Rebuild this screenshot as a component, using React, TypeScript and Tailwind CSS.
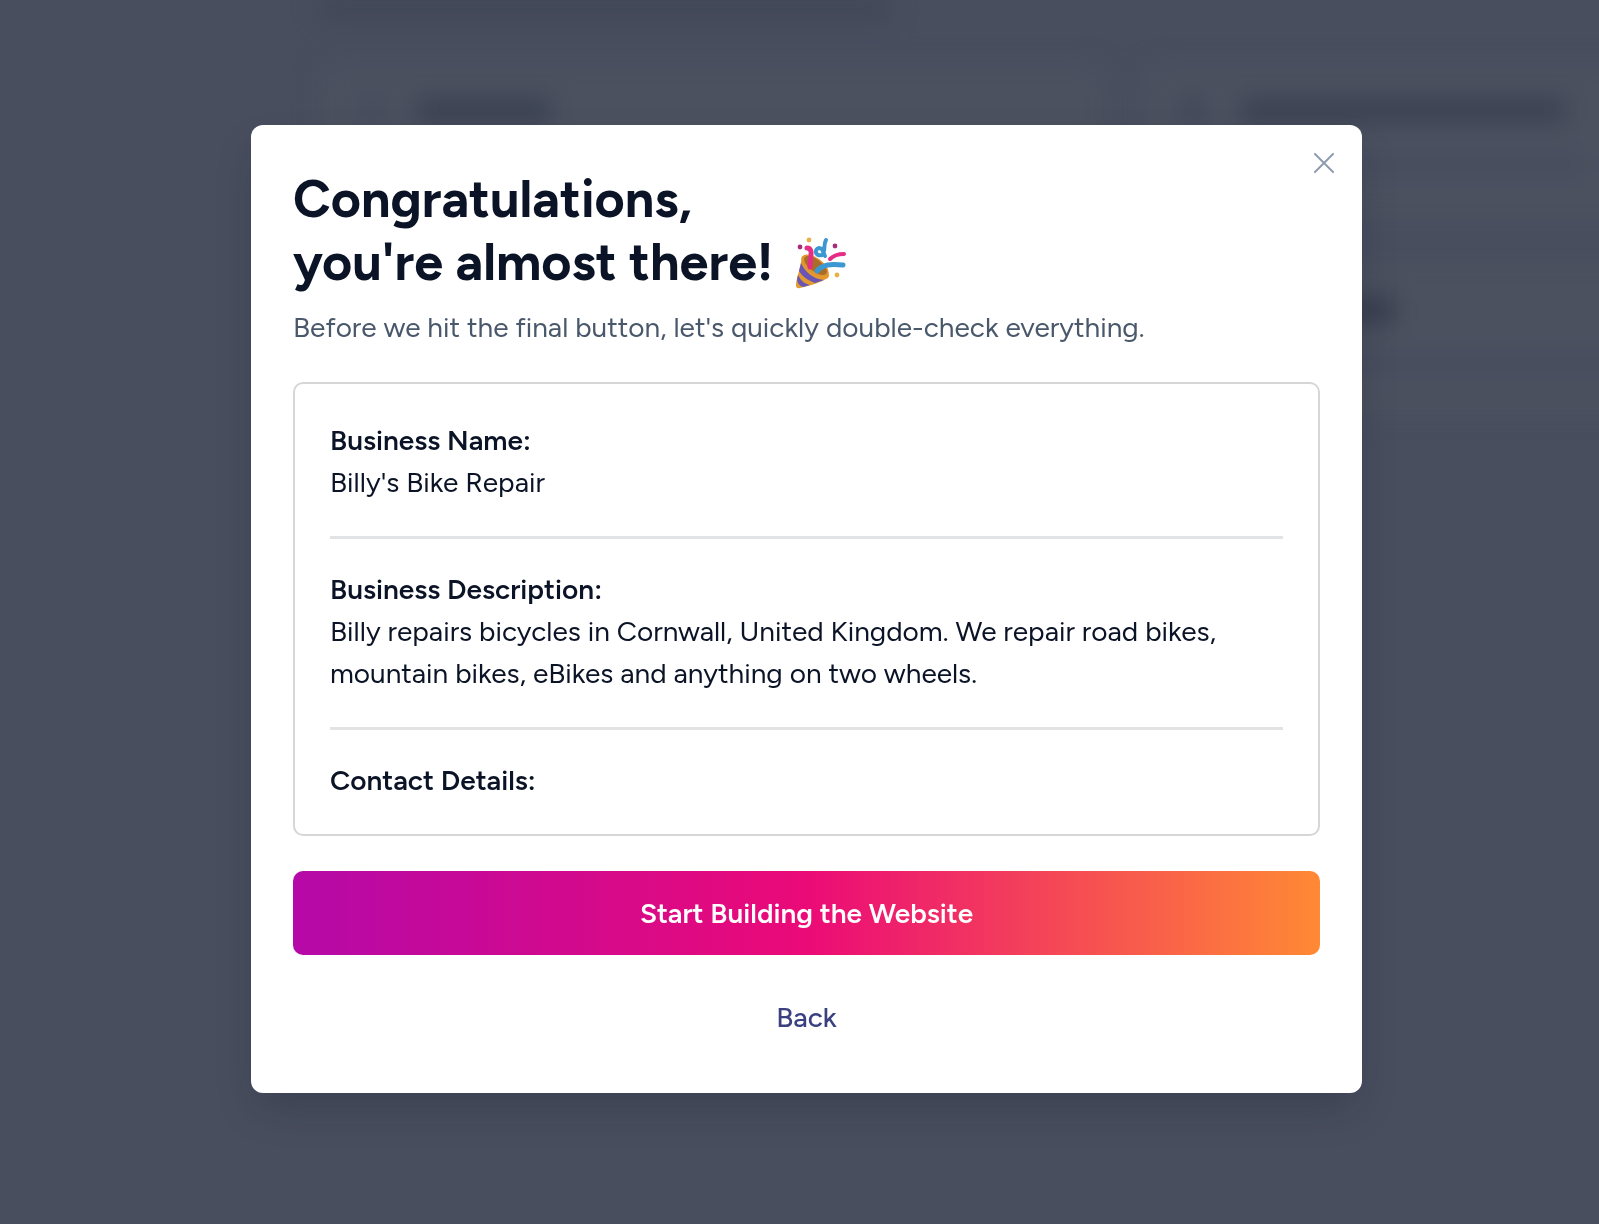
import type { ReactNode } from "react"

function PartyPopper() {
  return (
    <svg viewBox="0 0 52 52" className="size-[52px] shrink-0" fill="none" aria-hidden="true">
      <path d="M7 19 C6 30 1 42 1 48 Q1 52 5 51 C14 49 24 46 33 41 Q35 38 33 36Z" fill="#e59a2f" />
      <path d="M6 26 C10 35 18 42 29 43 L20 46 C12 43 7 39 4 34Z" fill="#6a55b5" />
      <path d="M3 38 C6 44 10 47 15 48 L8 50 C5 49 3 47 2 43Z" fill="#6a55b5" />
      <ellipse cx="20" cy="29" rx="16" ry="8" transform="rotate(37 20 29)" fill="#e0952e" />
      <ellipse cx="20.5" cy="28.5" rx="13.5" ry="6" transform="rotate(37 20.5 28.5)" fill="#a86d28" />
      <path d="M12 11 Q17 11 16 19 T15 30" stroke="#e52d85" strokeWidth="5" strokeLinecap="round" />
      <path d="M22 34 C28 27 36 27 48 28" stroke="#3c98d2" strokeWidth="5" strokeLinecap="round" />
      <path d="M35 22 Q40 17 49 17" stroke="#e52d85" strokeWidth="4" strokeLinecap="round" />
      <path d="M31 3 C28 8 31 14 27 18 C20 20 19 12 24 11 C29 11 28 16 30 19" stroke="#3c98d2" strokeWidth="4" strokeLinecap="round" />
      <circle cx="5" cy="10" r="2.4" fill="#a52d79" />
      <circle cx="14" cy="3" r="2.4" fill="#e8b04b" />
      <circle cx="40" cy="9" r="2.4" fill="#a52d79" />
      <circle cx="42" cy="38" r="2.4" fill="#e8b04b" />
    </svg>
  )
}

function Backdrop() {
  return (
    <div className="fixed inset-0 overflow-hidden bg-[#484e5e]" aria-hidden="true">
      <div className="ml-[20%] h-full w-full blur-md">
        <div className="h-[18px] w-[570px] bg-[#3f4556]" />
        <div className="mt-12 flex gap-10">
          <div className="h-80 w-[785px] shrink-0 rounded-xl bg-[#4b515f] px-10 py-8">
            <div className="flex gap-8">
              <div className="size-6 bg-[#434a5c]" />
              <div className="h-6 w-[135px] bg-[#394050]" />
            </div>
          </div>
          <div className="flex w-[785px] shrink-0 flex-col gap-10">
            <div className="h-[156px] rounded-xl bg-[#4b515f] px-9 py-8">
              <div className="flex gap-9">
                <div className="size-6 bg-[#3f4556]" />
                <div className="h-6 w-[325px] bg-[#394050]" />
              </div>
              <div className="mt-8 ml-16 h-5 w-[340px] bg-[#464c5d]" />
            </div>
            <div className="h-[150px] rounded-xl bg-[#4b515f] px-24 py-9">
              <div className="h-6 w-[155px] bg-[#353c4c]" />
              <div className="mt-8 h-5 w-full bg-[#464c5c]" />
            </div>
          </div>
        </div>
      </div>
    </div>
  )
}

function Detail({ label, children }: { label: string; children?: ReactNode }) {
  return (
    <div className="border-b-[3px] border-[#e1e3e4] pt-[29px] pb-[33px] first:pt-0 last:border-b-0 last:pb-0">
      <dt className="font-semibold">{label}</dt>
      {children && <dd>{children}</dd>}
    </div>
  )
}

export default function App() {
  return (
    <main className="flex min-h-screen items-center justify-center pb-1.5 pl-3.5 font-['Figtree','Lato',sans-serif] text-[28px] leading-[42px] text-[#0b1326]">
      <Backdrop />

      <div
        role="dialog"
        aria-modal="true"
        aria-labelledby="dialog-title"
        className="relative w-full max-w-[1111px] rounded-xl bg-white px-[42px] pt-[43px] pb-[55px] shadow-[0_20px_40px_-8px_rgba(15,23,42,0.25)]"
      >
        <button
          type="button"
          aria-label="Close"
          className="absolute top-6 right-6 flex size-7 cursor-pointer items-center justify-center text-[#8f9bb0]"
        >
          <svg viewBox="0 0 20 20" className="size-5" fill="none" stroke="currentColor" strokeWidth="2" strokeLinecap="round">
            <path d="M1 1 19 19M19 1 1 19" />
          </svg>
        </button>

        <h1 id="dialog-title" className="text-[52px] leading-[63px] font-bold">
          Congratulations,
          <span className="flex items-center gap-[22px]">
            you're almost there!
            <PartyPopper />
          </span>
        </h1>
        <p className="mt-3 text-[#4a586b]">Before we hit the final button, let's quickly double-check everything.</p>

        <dl className="mt-[34px] rounded-[10px] border-2 border-[#d5d6d8] px-[35px] pt-[35px] pb-[33px]">
          <Detail label="Business Name:">Billy's Bike Repair</Detail>
          <Detail label="Business Description:">
            Billy repairs bicycles in Cornwall, United Kingdom. We repair road bikes, mountain bikes, eBikes and
            anything on two wheels.
          </Detail>
          <Detail label="Contact Details:" />
        </dl>

        <button
          type="button"
          className="mt-[35px] h-[84px] w-full cursor-pointer rounded-[10px] bg-linear-to-r/srgb from-[#b509a8] via-[#eb0a77] to-[#ff8934] font-semibold text-white"
        >
          Start Building the Website
        </button>
        <button type="button" className="mt-[41px] block w-full cursor-pointer text-center font-medium text-[#3b4180]">
          Back
        </button>
      </div>
    </main>
  )
}
